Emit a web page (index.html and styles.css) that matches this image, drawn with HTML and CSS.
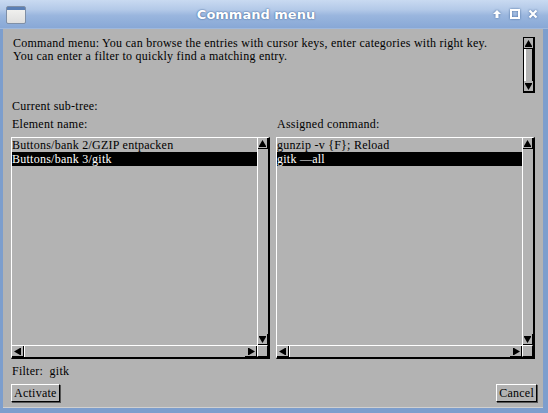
FILE: index.html
```html
<!DOCTYPE html>
<html>
<head>
<meta charset="utf-8">
<link rel="stylesheet" href="styles.css">
</head>
<body>
<div class="window">
  <div class="titlebar">
    <div class="appicon"></div>
    <div class="title">Command menu</div>
    <div class="tbtns">
      <svg width="10" height="10" viewBox="0 0 10 10"><path d="M5 1 L9 5 L6.5 5 L6.5 9 L3.5 9 L3.5 5 L1 5 Z" fill="#fff"/></svg>
      <svg width="10" height="10" viewBox="0 0 10 10"><rect x="1" y="1" width="8" height="8" fill="none" stroke="#fff" stroke-width="2"/></svg>
      <svg width="10" height="10" viewBox="0 0 10 10"><path d="M1.5 1.5 L8.5 8.5 M8.5 1.5 L1.5 8.5" stroke="#fff" stroke-width="2.2"/></svg>
    </div>
  </div>
  <div class="body">
    <div class="content">
      <div class="desc">
        <div class="desc-text">Command menu: You can browse the entries with cursor keys, enter categories with right key.<br>You can enter a filter to quickly find a matching entry.</div>
        <div class="vscroll desc-scroll">
          <div class="arrow"><svg width="9" height="9" viewBox="0 0 9 9"><path d="M4.5 1 L8 7 L1 7 Z" fill="#000"/><rect x="1" y="7" width="7" height="1" fill="#000"/></svg></div>
          <div class="trough"></div>
          <div class="arrow"><svg width="9" height="9" viewBox="0 0 9 9"><path d="M4.5 8 L8 2 L1 2 Z" fill="#000"/><rect x="1" y="1" width="7" height="1" fill="#000"/></svg></div>
        </div>
      </div>
      <div class="label subtree">Current sub-tree:</div>
      <div class="panes">
        <div class="pane">
          <div class="label">Element name:</div>
          <div class="listbox">
            <div class="list">
              <div class="row">Buttons/bank 2/GZIP entpacken</div>
              <div class="row sel">Buttons/bank 3/gitk</div>
            </div>
            <div class="vscroll">
              <div class="arrow"><svg width="9" height="9" viewBox="0 0 9 9"><path d="M4.5 1 L8 7 L1 7 Z" fill="#000"/><rect x="1" y="7" width="7" height="1" fill="#000"/></svg></div>
              <div class="trough"></div>
              <div class="arrow"><svg width="9" height="9" viewBox="0 0 9 9"><path d="M4.5 8 L8 2 L1 2 Z" fill="#000"/><rect x="1" y="1" width="7" height="1" fill="#000"/></svg></div>
            </div>
            <div class="hscroll">
              <div class="harrow"><svg width="10" height="9" viewBox="0 0 10 9"><path d="M1 4.5 L7 1 L7 8 Z" fill="#000"/><rect x="7" y="1" width="1" height="7" fill="#000"/></svg></div>
              <div class="htrough"></div>
              <div class="harrow"><svg width="10" height="9" viewBox="0 0 10 9"><path d="M9 4.5 L3 1 L3 8 Z" fill="#000"/><rect x="2" y="1" width="1" height="7" fill="#000"/></svg></div>
            </div>
            <div class="corner"></div>
          </div>
        </div>
        <div class="pane">
          <div class="label">Assigned command:</div>
          <div class="listbox">
            <div class="list">
              <div class="row">gunzip -v {F}; Reload</div>
              <div class="row sel">gitk &mdash;all</div>
            </div>
            <div class="vscroll">
              <div class="arrow"><svg width="9" height="9" viewBox="0 0 9 9"><path d="M4.5 1 L8 7 L1 7 Z" fill="#000"/><rect x="1" y="7" width="7" height="1" fill="#000"/></svg></div>
              <div class="trough"></div>
              <div class="arrow"><svg width="9" height="9" viewBox="0 0 9 9"><path d="M4.5 8 L8 2 L1 2 Z" fill="#000"/><rect x="1" y="1" width="7" height="1" fill="#000"/></svg></div>
            </div>
            <div class="hscroll">
              <div class="harrow"><svg width="10" height="9" viewBox="0 0 10 9"><path d="M1 4.5 L7 1 L7 8 Z" fill="#000"/><rect x="7" y="1" width="1" height="7" fill="#000"/></svg></div>
              <div class="htrough"></div>
              <div class="harrow"><svg width="10" height="9" viewBox="0 0 10 9"><path d="M9 4.5 L3 1 L3 8 Z" fill="#000"/><rect x="2" y="1" width="1" height="7" fill="#000"/></svg></div>
            </div>
            <div class="corner"></div>
          </div>
        </div>
      </div>
      <div class="filter">Filter:&nbsp; gitk</div>
      <div class="buttons">
        <div class="btn">Activate</div>
        <div class="btn">Cancel</div>
      </div>
    </div>
  </div>
</div>
</body>
</html>
```
FILE: styles.css
```css
* { box-sizing: border-box; }
html, body { margin: 0; padding: 0; }
body { width: 548px; height: 413px; overflow: hidden; background: #7d9ecd; }

.window {
  width: 548px; height: 413px;
  display: flex; flex-direction: column;
  background: #7d9ecd;
  font-family: "Liberation Serif", "Times New Roman", serif;
  font-size: 12px; color: #000;
  letter-spacing: 0.25px;
}

.titlebar {
  height: 29px; flex: none;
  display: flex; align-items: center;
  background: linear-gradient(#c9daf1 0%, #b3c9e8 35%, #9ab6de 55%, #88a8d6 100%);
  border-bottom: 1px solid #9fb8dc;
  padding: 0 6px;
  letter-spacing: 0;
}
.appicon {
  width: 20px; height: 18px; margin-top: 1px;
  background: linear-gradient(#5a7fb5 0, #5a7fb5 3px, #f0f0ee 3px, #dedede 100%);
  border: 1px solid #7f8fa6;
  border-radius: 2px;
}
.title {
  flex: 1; text-align: center;
  font-family: "DejaVu Sans", sans-serif; font-weight: bold; font-size: 13px;
  color: #fff; text-shadow: 0 0 2px #4c6e9f, 0 0 1px #4c6e9f;
  padding-right: 6px;
}
.tbtns { display: flex; gap: 8px; margin-right: 4px; }
.tbtns svg { filter: drop-shadow(0 0 1px #4c6e9f); }

.body {
  flex: 1;
  padding: 0 5px 5px 3px;
  display: flex;
}
.content {
  flex: 1;
  background: #b3b3b3;
  display: flex; flex-direction: column;
  padding: 0 0 0 8px;
  border-bottom: 1px solid #d0d0d0;
}

.desc { display: flex; margin-top: 8px; height: 56px; margin-right: 8px; }
.desc-text { flex: 1; line-height: 13px; padding-left: 2px; }

.vscroll {
  width: 11px; display: flex; flex-direction: column;
  border-left: 1px solid #fff;
}
.desc-scroll { border: 1px solid #000; width: 12px; }
.desc-scroll .trough { border-left: 2px solid #fff; border-right: 2px solid #000; }
.arrow {
  height: 11px; flex: none;
  border-right: 1px solid #000; border-bottom: 1px solid #000;
  display: flex; align-items: center; justify-content: center;
}
.arrow svg { display: block; }
.trough { flex: 1; }

.label { line-height: 13px; padding-left: 1px; }
.subtree { margin-top: 7px; }
.panes { display: flex; gap: 6px; margin-top: 5px; margin-right: 8px; }
.pane { flex: 1; display: flex; flex-direction: column; }
.listbox {
  margin-top: 6px;
  height: 222px;
  border-top: 1px solid #fff; border-left: 1px solid #fff;
  border-right: 2px solid #000; border-bottom: 2px solid #000;
  display: grid;
  grid-template-columns: 1fr 11px;
  grid-template-rows: 1fr 12px;
}
.list { overflow: hidden; }
.row { height: 14px; line-height: 14px; white-space: nowrap; }
.row.sel { background: #000; color: #fff; }

.hscroll { display: flex; border-top: 1px solid #fff; }
.harrow {
  width: 12px; flex: none;
  border-right: 1px solid #000; border-bottom: 1px solid #000;
  display: flex; align-items: center; justify-content: center;
}
.htrough { flex: 1; border-left: 1px solid #fff; }
.corner { border: 1px solid #000; border-top-color: #fff; border-left-color: #fff; }

.filter { margin-top: 6px; line-height: 13px; padding-left: 1px; }
.buttons { display: flex; justify-content: space-between; margin-top: 6px; margin-right: 6px; }
.btn {
  height: 18px; line-height: 16px;
  padding: 0 2px;
  border-top: 1px solid #fff; border-left: 1px solid #fff;
  border-right: 1px solid #000; border-bottom: 1px solid #000;
  box-shadow: 1px 1px 0 #555;
}
```
